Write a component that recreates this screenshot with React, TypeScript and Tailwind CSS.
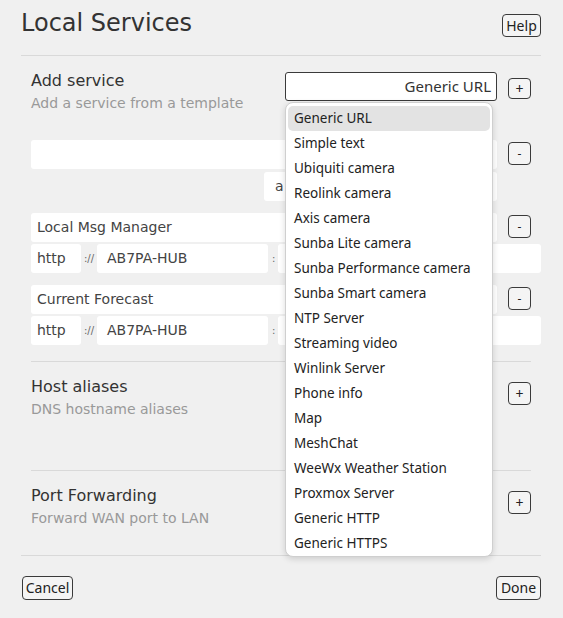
import React from "react";

const items = [
  "Generic URL",
  "Simple text",
  "Ubiquiti camera",
  "Reolink camera",
  "Axis camera",
  "Sunba Lite camera",
  "Sunba Performance camera",
  "Sunba Smart camera",
  "NTP Server",
  "Streaming video",
  "Winlink Server",
  "Phone info",
  "Map",
  "MeshChat",
  "WeeWx Weather Station",
  "Proxmox Server",
  "Generic HTTP",
  "Generic HTTPS",
];

function Btn({ className = "", children }: { className?: string; children: React.ReactNode }) {
  return (
    <button
      className={
        "flex items-center justify-center rounded-[4px] border border-[#3a3a3a] bg-[#f4f4f4] text-[#222] font-['Noto_Sans',sans-serif] leading-none " +
        className
      }
    >
      {children}
    </button>
  );
}

function UrlRow({ host }: { host: string }) {
  return (
    <div className="flex h-[29px] w-[510px] items-stretch text-[14px] text-[#444]">
      <div className="flex w-[50px] items-center rounded-[3px] bg-white pl-[6px]">http</div>
      <div className="ml-[3px] flex w-[10px] items-center text-[10px] text-[#666]">://</div>
      <div className="ml-[3px] flex w-[171px] items-center rounded-[3px] bg-white pl-[10px]">{host}</div>
      <div className="ml-[4px] flex w-[2px] items-center text-[10px] text-[#666]">:</div>
      <div className="ml-[4px] flex-1 rounded-[3px] bg-white" />
    </div>
  );
}

function NameRow({ name }: { name: string }) {
  return (
    <div className="flex items-start">
      <div className="flex h-[29px] w-[466px] items-center rounded-[3px] bg-white pl-[6px] text-[14px] text-[#444]">
        {name}
      </div>
      <Btn className="ml-[11px] mt-[2px] h-[23px] w-[23px] text-[12px]">-</Btn>
    </div>
  );
}

function Section({ title, sub, h }: { title: string; sub: string; h: string }) {
  return (
    <div className={"flex items-start pt-[15px] " + h}>
      <div className="flex-1">
        <div className="text-[16px] leading-[20px] text-[#333]">{title}</div>
        <div className="mt-[3px] text-[14px] leading-[18px] text-[#999]">{sub}</div>
      </div>
      <Btn className="mt-[5px] h-[23px] w-[23px] text-[14px]">+</Btn>
    </div>
  );
}

export default function App() {
  return (
    <div className="min-h-[618px] w-full bg-[#f0f0f0] pl-[21px] pr-[22px] pb-[18px] font-['DejaVu_Sans',sans-serif]">
      <div className="flex items-start justify-between">
        <h1 className="pt-[9px] text-[24px] leading-[28px] text-[#333]">Local Services</h1>
        <Btn className="mt-[14px] h-[23px] w-[39px] text-[14px]">Help</Btn>
      </div>
      <div className="mt-[18px] h-px bg-[#d9d9d9]" />

      <div className="px-[10px]">
        <div className="flex items-start pt-[15px]">
          <div className="flex-1">
            <div className="text-[16px] leading-[20px] text-[#333]">Add service</div>
            <div className="mt-[3px] text-[14px] leading-[18px] text-[#999]">Add a service from a template</div>
          </div>
          <div className="relative mt-[1px]">
            <div className="flex h-[29px] w-[212px] items-center justify-end rounded-[3px] border border-[#3a3a3a] bg-white pr-[5px] font-['Noto_Sans',sans-serif] text-[15px] text-[#333]">
              Generic URL
            </div>
            <div className="absolute left-0 top-[30px] z-10 w-[208px] rounded-[8px] border border-[#cfcfcf] bg-white px-[2px] pt-[3px] shadow-[0_2px_6px_rgba(0,0,0,0.15)] font-['Noto_Sans',sans-serif]">
              {items.map((it, i) => (
                <div
                  key={it}
                  className={
                    "h-[25px] rounded-[5px] pl-[6px] text-[13.5px] leading-[25px] text-[#222] " +
                    (i === 0 ? "bg-[#e3e3e3]" : "")
                  }
                >
                  {it}
                </div>
              ))}
            </div>
          </div>
          <Btn className="ml-[11px] mt-[7px] h-[21px] w-[23px] text-[14px]">+</Btn>
        </div>

        <div className="mt-[28px] flex flex-col gap-[12px]">
          <div className="flex flex-col gap-[3px]">
            <NameRow name="" />
            <div className="flex h-[29px] w-[466px] justify-end">
              <div className="flex w-[233px] items-center rounded-[3px] bg-white pl-[11px] text-[14px] text-[#444]">a</div>
            </div>
          </div>
          <div className="flex flex-col gap-[2px]">
            <NameRow name="Local Msg Manager" />
            <UrlRow host="AB7PA-HUB" />
          </div>
          <div className="flex flex-col gap-[2px]">
            <NameRow name="Current Forecast" />
            <UrlRow host="AB7PA-HUB" />
          </div>
        </div>

        <div className="mt-[16px] h-px bg-[#d9d9d9]" />
        <Section title="Host aliases" sub="DNS hostname aliases" h="h-[108px]" />
        <div className="h-px bg-[#d9d9d9]" />
        <Section title="Port Forwarding" sub="Forward WAN port to LAN" h="h-[84px]" />
      </div>
      <div className="h-px bg-[#d9d9d9]" />
      <div className="mt-[20px] flex items-start justify-between">
        <Btn className="ml-px h-[24px] w-[51px] text-[14px]">Cancel</Btn>
        <Btn className="h-[24px] w-[45px] text-[14px]">Done</Btn>
      </div>
    </div>
  );
}
